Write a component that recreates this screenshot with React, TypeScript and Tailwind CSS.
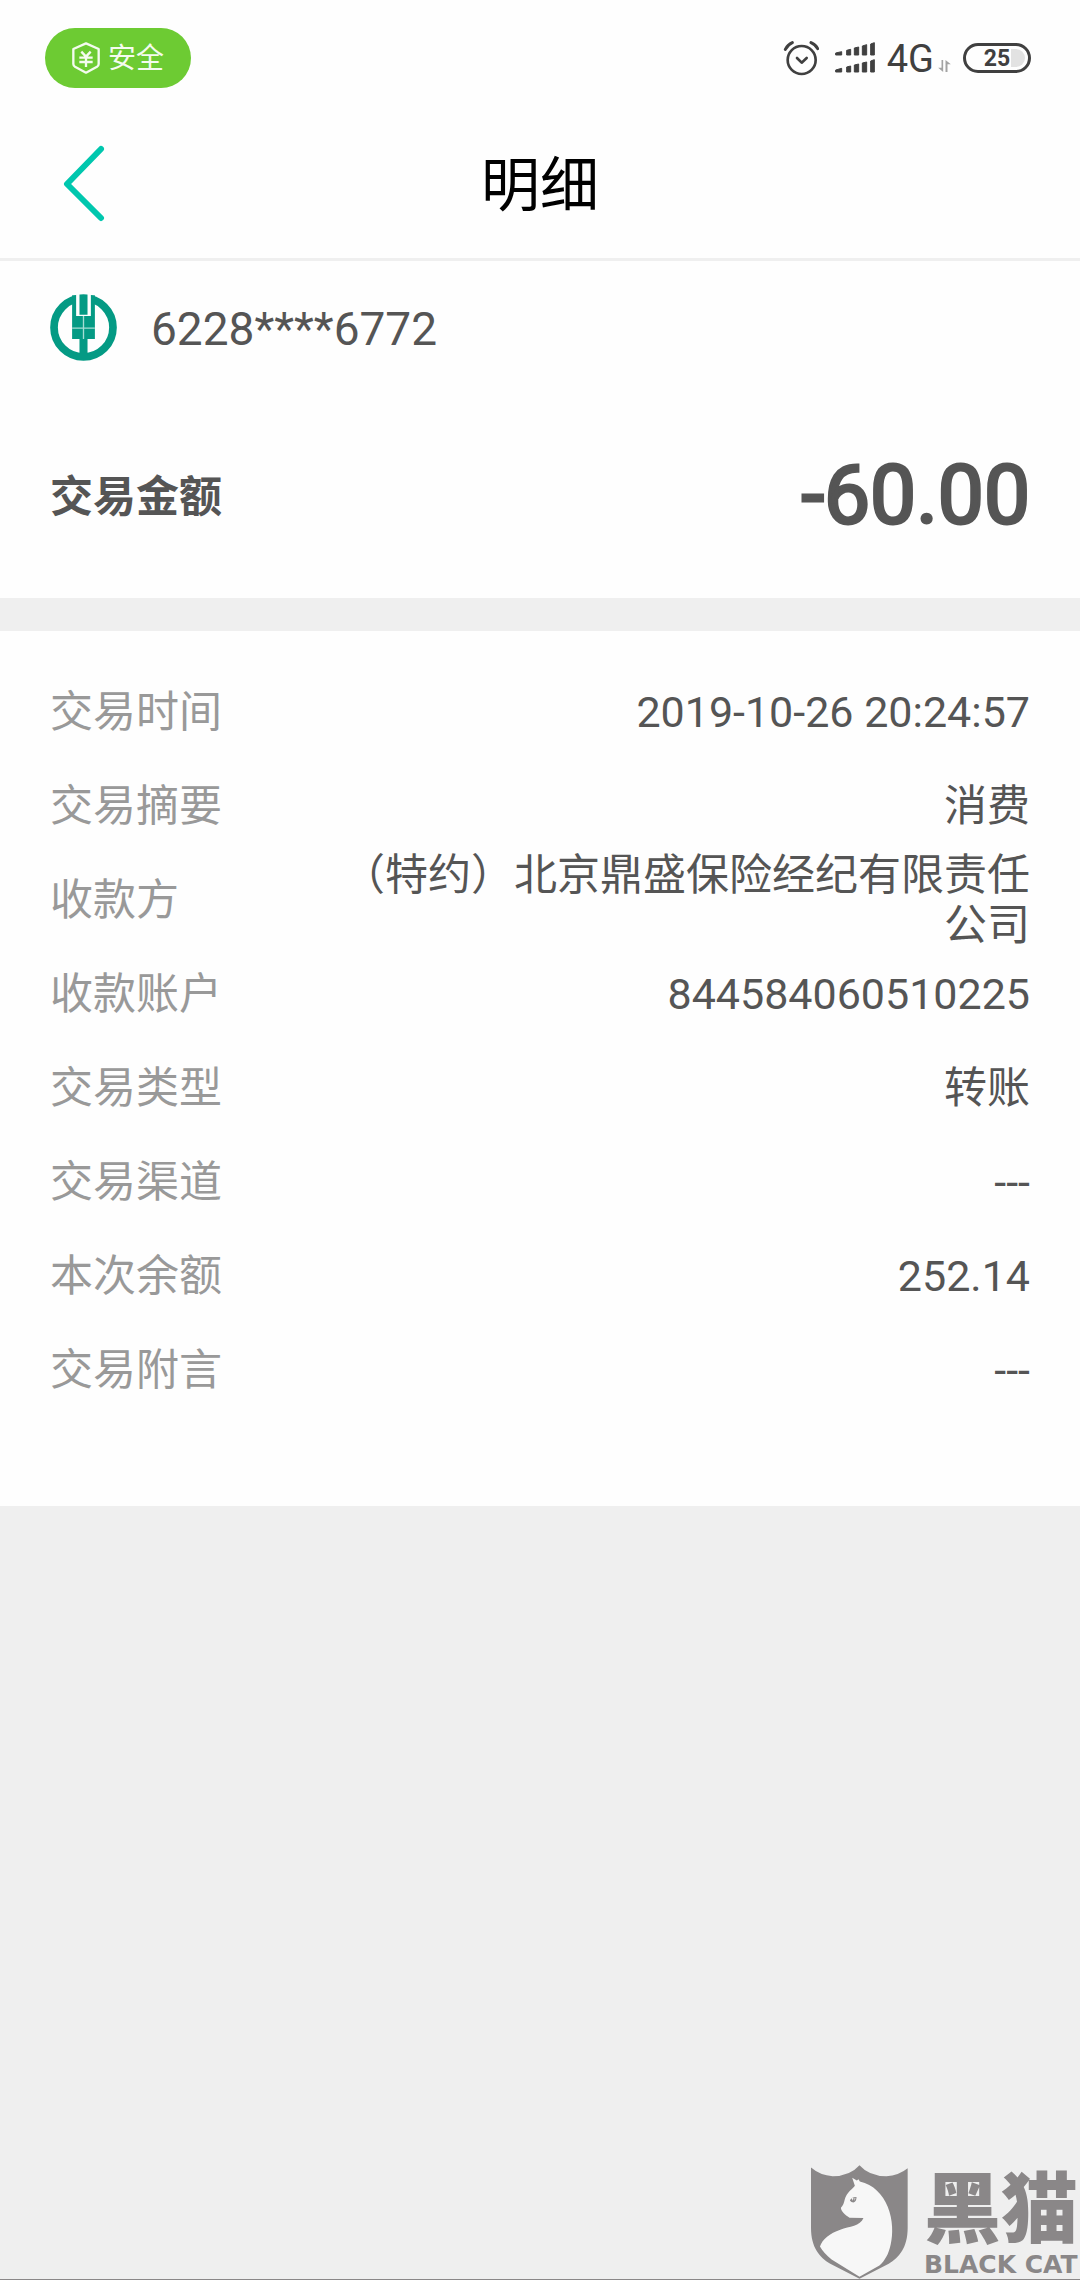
import { FC } from "react";

type Detail = {
  label: string;
  value: string;
};

const details: Detail[] = [
  { label: "交易时间", value: "2019-10-26 20:24:57" },
  { label: "交易摘要", value: "消费" },
  { label: "收款方", value: "（特约）北京鼎盛保险经纪有限责任公司" },
  { label: "收款账户", value: "844584060510225" },
  { label: "交易类型", value: "转账" },
  { label: "交易渠道", value: "---" },
  { label: "本次余额", value: "252.14" },
  { label: "交易附言", value: "---" },
];

const ShieldIcon: FC = () => (
  <svg viewBox="0 0 84 96" className="h-8 w-7" fill="none" stroke="#f4fbef">
    <path d="M42 4 L80 21 V66 Q80 71 75 74 L42 92 L9 74 Q4 71 4 66 V21 Z" strokeWidth="7" strokeLinejoin="round" />
    <path d="M28 29 L42 44 L56 29 M22 47 H62 M22 60 H62 M42 44 V75" strokeWidth="7" />
  </svg>
);

const AlarmIcon: FC = () => (
  <svg viewBox="0 0 108 108" className="size-9" fill="none" stroke="#404040" strokeWidth="8" strokeLinecap="round">
    <circle cx="56" cy="60" r="42" />
    <path d="M42 54 L56 68 L71 54" strokeLinejoin="round" />
    <path d="M7 28 Q14 14 28 8 M84 8 Q98 14 104 26" strokeWidth="9" />
  </svg>
);

const SignalIcon: FC = () => (
  <svg viewBox="0 0 120 96" className="h-8 w-10" fill="#404040" stroke="#404040" strokeWidth="3" strokeLinejoin="round">
    <path d="M2 33 L20 29 V39 H2 Z M35 25 L47 22 V39 H35 Z M58 18 L71 15 V39 H58 Z M82 12 L95 8 V39 H82 Z M107 6 L118 2 V39 H107 Z" />
    <path d="M2 84 L20 79 V90 H2 Z M35 75 L47 72 V90 H35 Z M58 69 L71 66 V90 H58 Z M82 63 L95 60 V90 H82 Z M107 57 L118 53 V90 H107 Z" />
  </svg>
);

const DataArrowsIcon: FC = () => (
  <svg viewBox="0 0 38 36" className="mt-4 h-3 w-[13px]" fill="#a3a3a3">
    <path d="M10 0 H15 V36 L0 23 H10 Z" />
    <path d="M22 0 L38 13 H28 V36 H22 Z" />
  </svg>
);

const BankLogo: FC = () => (
  <svg viewBox="0 0 200 200" className="size-[67px]">
    <circle cx="100" cy="100" r="88" fill="none" stroke="#049a84" strokeWidth="23" />
    <path fill="#049a84" d="M66 4 H134 V134 H112 V185 H88 V134 H66 Z" />
    <path fill="#fefefe" d="M78 0 H88 V62 H112 V0 H122 V66 H78 Z" />
    <path stroke="#a5ddd4" strokeWidth="4" d="M100 66 V134 M66 102 H134" />
  </svg>
);

const CatShield: FC = () => (
  <svg viewBox="0 0 292 342" className="h-[114px] w-[97px] shrink-0">
    <path
      fill="#8a8788"
      d="M0 7 Q28 31 65 33 Q117 33 146 0 Q175 33 227 33 Q264 31 291 9 V188 C291 248 266 276 234 297 L146 342 L58 297 C26 276 0 248 0 188 Z"
    />
    <path
      fill="#f7f7f7"
      d="M124 38 L138 46 L143 42 L147 49 C188 58 216 88 231 125 C247 165 247 208 240 238 C234 268 222 288 206 302 L146 336 L62 284 C46 272 34 258 27 245 C34 222 57 205 88 194 C116 184 148 184 158 159 L116 158 C102 149 91 140 90 128 C102 117 99 104 106 92 C113 79 127 70 132 62 Z"
    />
    <path fill="#8a8788" d="M117 106 Q124 93 137 96 Q137 110 128 112 Q121 112 117 106 Z" />
    <path fill="#f7f7f7" d="M122 99 L128 97 L126 107 Z M131 98 L134 98 L131 108 Z" />
  </svg>
);

const StatusBar: FC = () => (
  <div className="flex items-center justify-between pt-7 pr-[49px] pb-5 pl-[45px]">
    <div className="flex h-[60px] items-center gap-2 rounded-full bg-[#6dcb33] px-[27px] text-[28px] leading-none text-[#f4fbef]">
      <ShieldIcon />
      <span className="pt-0.5">安全</span>
    </div>
    <div className="flex items-center text-[#404040]">
      <AlarmIcon />
      <div className="ml-4">
        <SignalIcon />
      </div>
      <span className="ml-3 pt-0.5 text-[38px] leading-none">4G</span>
      <div className="ml-1">
        <DataArrowsIcon />
      </div>
      <div className="relative ml-3 flex h-[30px] w-[68px] items-center justify-center rounded-full border-3 border-[#404040]">
        <span className="absolute top-[3px] right-[3px] bottom-[3px] w-3.5 rounded-r-full bg-[#e2e2e2]" />
        <span className="relative text-[23px] leading-none font-bold">25</span>
      </div>
    </div>
  </div>
);

export default function App() {
  return (
    <div
      lang="zh-CN"
      className="flex min-h-screen flex-col bg-[#efefef] font-[Roboto,'Noto_Sans_CJK_SC',sans-serif] text-[#555555]"
    >
      <div className="bg-[#fefefe]">
        <StatusBar />
        <header className="grid h-[153px] grid-cols-[1fr_auto_1fr] items-center border-b-3 border-[#efefef] px-[62px]">
          <button type="button" aria-label="返回" className="w-11">
            <svg viewBox="0 0 44 78" className="h-[78px] w-11" fill="none" stroke="#00c7ae" strokeWidth="6" strokeLinecap="round" strokeLinejoin="round">
              <path d="M39 5 L5 40 L39 74" />
            </svg>
          </button>
          <h1 className="pt-1 text-[59px] leading-none text-black">明细</h1>
        </header>
        <section className="px-[50px] pt-[33px] pb-[55px]">
          <div className="flex items-center gap-[34px]">
            <BankLogo />
            <span className="pt-0.5 text-[46px] leading-none">6228****6772</span>
          </div>
          <div className="mt-[86px] flex h-24 items-center justify-between">
            <span className="pt-1 text-[43px] leading-none font-bold">交易金额</span>
            <span className="text-[82px] leading-none [-webkit-text-stroke:3px_#555555]">-60.00</span>
          </div>
        </section>
      </div>

      <dl className="mt-[33px] bg-[#fefefe] px-[50px] pt-[33px] pb-[90px] text-[43px] leading-[50px]">
        {details.map((item) => (
          <div key={item.label} className="flex h-[94px] items-center justify-between">
            <dt className="shrink-0 pt-0.5 text-[#999999]">{item.label}</dt>
            <dd className="w-5/7 pt-0.5 text-right">{item.value}</dd>
          </div>
        ))}
      </dl>

      <footer className="mt-auto flex items-end justify-end gap-4 border-b border-[#8a8788] pr-0.5 text-[#8a8788]">
        <CatShield />
        <div className="flex flex-col">
          <span className="text-[77px] leading-[80px] font-black">黑猫</span>
          <span className="font-['DejaVu_Sans',sans-serif] text-[25px] leading-7 font-bold">BLACK CAT</span>
        </div>
      </footer>
    </div>
  );
}
